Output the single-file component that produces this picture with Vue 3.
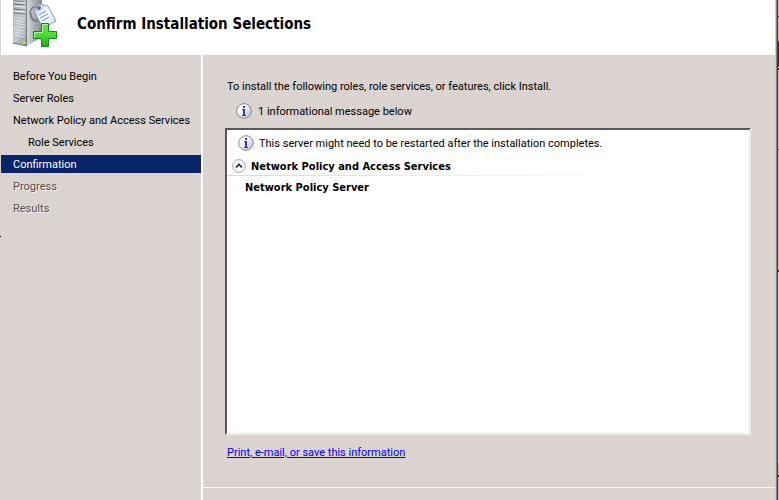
<script setup>
import { ref } from 'vue'

const steps = [
  { label: 'Before You Begin' },
  { label: 'Server Roles' },
  { label: 'Network Policy and Access Services' },
  { label: 'Role Services', nested: true },
  { label: 'Confirmation', current: true },
  { label: 'Progress', pending: true },
  { label: 'Results', pending: true },
]
const expanded = ref(true)
</script>

<template>
  <div class="window">
    <div class="edge-left"><i></i></div>
    <div class="wizard">
      <header class="banner">
        <svg class="logo" viewBox="0 0 48 48" aria-hidden="true">
          <defs>
            <linearGradient id="front" x1="0" x2="1" y1="0" y2="1">
              <stop offset="0" stop-color="#a3a8ad" />
              <stop offset="0.5" stop-color="#c6cacd" />
              <stop offset="1" stop-color="#8e9499" />
            </linearGradient>
            <linearGradient id="side" x1="0" x2="1">
              <stop offset="0" stop-color="#d6d8da" />
              <stop offset="0.5" stop-color="#a9adb1" />
              <stop offset="1" stop-color="#85898d" />
            </linearGradient>
            <linearGradient id="tag" x1="0" x2="1" y1="0" y2="1">
              <stop offset="0" stop-color="#8fb4d6" />
              <stop offset="0.4" stop-color="#f2f8fd" />
              <stop offset="0.8" stop-color="#dcebf7" />
              <stop offset="1" stop-color="#8db8dc" />
            </linearGradient>
            <linearGradient id="plus" x1="0" x2="0" y1="0" y2="1">
              <stop offset="0" stop-color="#6ee04a" />
              <stop offset="0.5" stop-color="#4edb36" />
              <stop offset="1" stop-color="#1fae18" />
            </linearGradient>
          </defs>
          <path d="M0 0H14V46L0 43Z" fill="url(#front)" />
          <path d="M14 0H29V37L14 46Z" fill="url(#side)" />
          <path d="M1 1 12 2M1 4 12 5M1 9 12 10M1 13 12 14" stroke="#70767b" fill="none" />
          <path d="M1 2 12 3M1 6 12 7M1 11 12 12" stroke="#eef0f1" fill="none" />
          <path d="M1 17 12 19M1 20 12 22M1 23 12 25M1 26 12 28M1 29 12 31M1 32 12 34M1 35 12 37" stroke="#dde0e2" fill="none" />
          <path d="M0 43 14 46" stroke="#6c7277" fill="none" />
          <path d="M13.5 0V46" stroke="#777d82" fill="none" />
          <path d="M10 41h2v3h-2z" fill="#c6f000" />
          <path d="M26 8C20 6 17.500 9 17.500 13C17.500 19 20 21 25 21" fill="none" stroke="#777e85" stroke-width="2" />
          <path d="M26 8C20 7 18.500 10 18.500 13" fill="none" stroke="#c5cacf" stroke-width="1" />
          <path d="M21 11 26 4 35 6 43 21 30 28Z" fill="url(#tag)" stroke="#7ea3c2" stroke-linejoin="round" />
          <circle cx="26" cy="8" r="2" fill="#5f7383" />
          <path d="M26 15 33 11M27 18 35 14M29 21 36 17" stroke="#7c86bc" stroke-width="1" fill="none" />
          <path d="M28.500 23.500h7v8h8v7h-8v8h-7v-8h-8v-7h8z" fill="url(#plus)" stroke="#13871a" />
          <path d="M29.500 32.500v-8h5M21.500 37.500v-5h8" stroke="#b0f596" fill="none" />
        </svg>
        <h1>Confirm Installation Selections</h1>
      </header>

      <div class="body">
        <nav class="steps" aria-label="Wizard steps">
          <a
            v-for="step in steps"
            :key="step.label"
            href="#"
            :class="{ nested: step.nested, current: step.current, pending: step.pending }"
            :aria-current="step.current ? 'step' : undefined"
          >{{ step.label }}</a>
        </nav>

        <main class="content">
          <section class="page">
            <p>To install the following roles, role services, or features, click Install.</p>
            <div class="summary">
              <svg class="info" viewBox="0 0 16 16" aria-hidden="true">
                <defs>
                  <linearGradient id="disc" x1="0" x2="1" y1="0" y2="1">
                    <stop offset="0.3" stop-color="#ffffff" />
                    <stop offset="1" stop-color="#b4b8c2" />
                  </linearGradient>
                </defs>
                <circle cx="8" cy="8" r="7.3" fill="url(#disc)" stroke="#858992" />
                <path d="M7 3h2v2H7zM6 6h3v6h1v1H6v-1h1V7H6z" fill="#1741c4" />
              </svg>
              <span>1 informational message below</span>
            </div>

            <div class="report">
              <div class="notice">
                <svg class="info" viewBox="0 0 16 16" aria-hidden="true">
                  <circle cx="8" cy="8" r="7.3" fill="url(#disc)" stroke="#858992" />
                  <path d="M7 3h2v2H7zM6 6h3v6h1v1H6v-1h1V7H6z" fill="#1741c4" />
                </svg>
                <span>This server might need to be restarted after the installation completes.</span>
              </div>
              <button class="group" type="button" :aria-expanded="expanded" @click="expanded = !expanded">
                <svg class="chevron" viewBox="0 0 14 14" aria-hidden="true">
                  <circle cx="7" cy="7" r="6.4" fill="#f5f5f6" stroke="#a9a9ad" />
                  <path d="M4 8.500 7 5.500 10 8.500" fill="none" stroke="#222" stroke-width="1.6" />
                </svg>
                <span>Network Policy and Access Services</span>
              </button>
              <div class="rule"></div>
              <div v-if="expanded" class="entry">Network Policy Server</div>
            </div>

            <a class="export" href="#">Print, e-mail, or save this information</a>
          </section>
          <footer class="footer"></footer>
        </main>
      </div>
    </div>
    <div class="edge-right"><i></i><i></i><i></i><i></i></div>
  </div>
</template>

<style>
body {
  background: #dbd3cf;
}
</style>

<style scoped>
.window {
  display: grid;
  grid-template-columns: 1px minmax(0, 1fr) 4px;
  min-height: 100vh;
  background: #dbd3cf;
  color: #000;
  font: 11px/16px Roboto, "DejaVu Sans", sans-serif;
}
.edge-left {
  padding-top: 236px;
}
.edge-left i {
  display: block;
  height: 1px;
  background: #000;
}
.wizard {
  display: flex;
  flex-direction: column;
}
.banner {
  display: flex;
  align-items: flex-start;
  gap: 16px;
  height: 55px;
  padding-left: 12px;
  box-sizing: border-box;
  background: #fff;
}
.logo {
  width: 48px;
  height: 48px;
  flex: none;
}
h1 {
  margin: 0;
  padding-top: 15px;
  font-family: "DejaVu Sans Condensed", "DejaVu Sans", sans-serif;
  font-size: 15px;
  line-height: 18px;
  font-weight: bold;
}
.body {
  display: flex;
  flex: 1;
}
.steps {
  display: flex;
  flex-direction: column;
  gap: 4px;
  width: 200px;
  flex: none;
  padding-top: 12px;
  border-right: 2px solid #fff;
}
.steps a {
  padding: 2px 0 0 12px;
  color: inherit;
  text-decoration: none;
  white-space: nowrap;
}
.steps .nested {
  padding-left: 27px;
}
.steps .current {
  background: #0a246a;
  color: #fff;
}
.steps .pending {
  color: #555150;
  text-shadow: 1px 1px #f3efed;
}
.content {
  display: flex;
  flex: 1;
  flex-direction: column;
}
.page {
  display: flex;
  flex: 1;
  flex-direction: column;
  padding: 22px 24px 26px 22px;
}
p {
  margin: 0;
  padding: 2px 0 0 2px;
}
.summary {
  display: flex;
  align-items: center;
  gap: 6px;
  padding: 7px 0 8px 11px;
}
.summary span,
.notice span,
.group span {
  padding-top: 2px;
}
.info {
  width: 16px;
  height: 16px;
}
.report {
  flex: 1;
  padding-top: 4px;
  border: 2px solid;
  border-color: #595757 #eceaea #eceaea #595757;
  background: #fff;
}
.notice {
  display: flex;
  align-items: center;
  gap: 5px;
  padding-left: 11px;
}
.group {
  display: flex;
  align-items: center;
  gap: 5px;
  width: 100%;
  margin-top: 5px;
  padding: 0 0 0 5px;
  border: 0;
  background: none;
  color: inherit;
  font: inherit;
  font-family: "DejaVu Sans Condensed", "DejaVu Sans", sans-serif;
  font-weight: bold;
}
.chevron {
  width: 14px;
  height: 14px;
}
.rule {
  height: 1px;
  background: linear-gradient(90deg, #c5dcf5, #fff 75%);
}
.entry {
  padding: 4px 0 0 18px;
  font-family: "DejaVu Sans Condensed", "DejaVu Sans", sans-serif;
  font-weight: bold;
}
.export {
  align-self: flex-start;
  margin-top: 8px;
  padding: 2px 0 0 2px;
  color: #00f;
}
.footer {
  height: 12px;
  border-top: 1px solid #fff;
}
.edge-right {
  display: grid;
  grid-template-columns: repeat(4, 1px);
}
.edge-right i:nth-child(1) {
  background: #d2cdca;
}
.edge-right i:nth-child(2) {
  background: #858385;
}
.edge-right i:nth-child(3) {
  background: #414043;
}
.edge-right i:nth-child(4) {
  background: linear-gradient(#c9bfba 0 16px, #333 16px 17px, #c9bfba 17px 41px, #333 41px 67px, #fff 67px 68px, #333 68px 70px, #c9bfba 70px 149px, #333 149px 150px, #c9bfba 150px 270px, #222 270px 272px, #eee2de 272px 463px, #c9bfba 463px 475px, #222 475px 477px, #c9bfba 477px);
}
</style>
